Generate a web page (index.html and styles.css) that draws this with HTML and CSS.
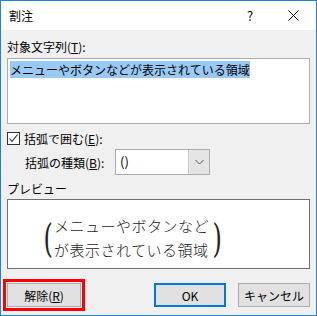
FILE: index.html
```html
<!DOCTYPE html>
<html lang="ja">
<head>
  <meta charset="UTF-8" />
  <title>割注</title>
  <link rel="stylesheet" href="styles.css">
</head>
<body>
  <div class="window">
    <div class="titlebar">
      <span class="title">割注</span>
      <span class="help">?</span>
      <span class="close">
        <svg width="11" height="11" viewBox="0 0 11 11"><path d="M0.5 0.5 L10.5 10.5 M10.5 0.5 L0.5 10.5" stroke="#000" stroke-width="1" fill="none"/></svg>
      </span>
    </div>

    <div class="content">
      <div class="label first">対象文字列(<u>T</u>):</div>
      <div class="textbox"><span class="selected">メニューやボタンなどが表示されている領域</span></div>

      <div class="check-row">
        <span class="checkbox">
          <svg width="11" height="11" viewBox="0 0 11 11"><path d="M1.5 5.5 L4 8.5 L9.5 1.5" stroke="#222" stroke-width="1.1" fill="none"/></svg>
        </span>
        <span>括弧で囲む(<u>E</u>):</span>
      </div>

      <div class="combo-row">
        <span class="combo-label">括弧の種類(<u>B</u>):</span>
        <div class="combo">
          <span class="combo-value">()</span>
          <span class="combo-btn">
            <svg width="9" height="6" viewBox="0 0 9 6"><path d="M0.5 1 L4.5 5 L8.5 1" stroke="#555" stroke-width="1" fill="none"/></svg>
          </span>
        </div>
      </div>

      <div class="label preview-label">プレビュー</div>
      <div class="preview">
        <span class="paren">(</span>
        <div class="preview-text">
          <div>メニューやボタンなど</div>
          <div>が表示されている領域</div>
        </div>
        <span class="paren">)</span>
      </div>

      <div class="buttons">
        <button class="btn marked">解除(<u>R</u>)</button>
        <span class="spacer"></span>
        <button class="btn default">OK</button>
        <button class="btn">キャンセル</button>
      </div>
    </div>
  </div>
</body>
</html>
```

FILE: styles.css
```css
* {
  box-sizing: border-box;
  margin: 0;
  padding: 0;
}
body {
  font-family: "Noto Sans CJK JP", "Noto Sans", sans-serif;
  font-size: 12px;
  color: #000;
  background: #fff;
}
u {
  text-decoration: underline;
  text-underline-offset: 1px;
}
.window {
  width: 317px;
  height: 316px;
  border: 1px solid #1c84d6;
  background: #f0f0f0;
  display: flex;
  flex-direction: column;
}
.titlebar {
  height: 29px;
  background: #fff;
  display: flex;
  align-items: center;
  padding-left: 8px;
}
.title {
  flex: 1;
  font-size: 12px;
}
.help {
  font-size: 13px;
  width: 14px;
  margin-right: 31px;
  text-align: center;
}
.close {
  display: flex;
  margin-right: 17px;
}
.content {
  padding: 0 6px;
  display: flex;
  flex-direction: column;
}
.label {
  height: 14px;
  line-height: 14px;
}
.first {
  margin-top: 10px;
}
.textbox {
  margin-top: 4px;
  height: 66px;
  background: #fff;
  border: 1px solid #abadb3;
  padding: 4px 2px;
  line-height: 14px;
}
.selected {
  background: #99c9f5;
}
.check-row {
  margin-top: 6px;
  height: 16px;
  display: flex;
  align-items: center;
  gap: 4px;
}
.checkbox {
  width: 13px;
  height: 13px;
  border: 1px solid #333;
  background: #fff;
  display: flex;
  align-items: center;
  justify-content: center;
}
.combo-row {
  margin-top: 3px;
  display: flex;
  align-items: center;
  padding-left: 18px;
}
.combo-label {
  width: 90px;
}
.combo {
  width: 95px;
  height: 26px;
  border: 1px solid #abadb3;
  background: #fff;
  display: flex;
}
.combo-value {
  flex: 1;
  padding-left: 4px;
  line-height: 24px;
  font-size: 13px;
}
.combo-btn {
  width: 21px;
  background: #e5e5e5;
  border-left: 1px solid #c9c9c9;
  display: flex;
  align-items: center;
  justify-content: center;
}
.preview-label {
  margin-top: 7px;
}
.preview {
  margin-top: 3px;
  height: 70px;
  background: #fff;
  border: 1px solid #707070;
  display: flex;
  align-items: center;
  padding-left: 33px;
  padding-top: 8px;
}
.paren {
  font-family: "DejaVu Serif", "Liberation Serif", serif;
  font-size: 40px;
  line-height: 44px;
  font-weight: 200;
  color: #222;
  transform: scaleX(0.6);
  width: 12px;
  text-align: center;
}
.preview-text {
  font-size: 15px;
  line-height: 24px;
  letter-spacing: 0.5px;
  font-weight: 300;
  color: #222;
  margin: 0 1px;
}
.buttons {
  margin-top: 14px;
  display: flex;
  align-items: center;
  gap: 12px;
  padding-right: 0;
}
.spacer {
  flex: 1;
}
.btn {
  font-family: inherit;
  font-size: 12px;
  width: 72px;
  height: 24px;
  background: #e1e1e1;
  border: 1px solid #adadad;
  color: #000;
}
.default {
  border: 2px solid #0078d7;
}
.marked {
  width: 74px;
  margin-left: 0;
  outline: 3px solid #f00;
  outline-offset: 1px;
}
```
